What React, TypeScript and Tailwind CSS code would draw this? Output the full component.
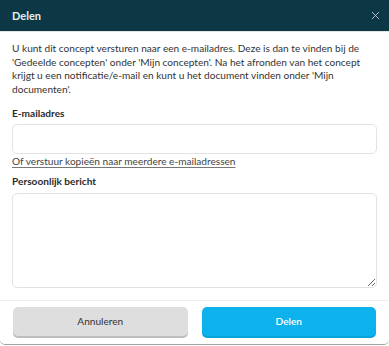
import React from 'react'
import { X } from 'lucide-react'

export default function App() {
  return (
    <div className="w-[389px] h-[346px] bg-white overflow-hidden" style={{ fontFamily: 'Lato, "Open Sans", sans-serif' }}>
      <div className="flex flex-col h-[345px] bg-white rounded-b-[5px] border-b-[1.5px] border-[#a3a3a3] overflow-hidden">
        {/* Header */}
        <div className="flex items-center justify-between h-[32px] shrink-0 pl-3 pr-[7px] bg-[#0b3844] border-b border-[#dfe5e7]">
          <span className="text-[11px] leading-[14px] font-bold text-[#e9eef0]">Delen</span>
          <X className="w-[13px] h-[13px] text-[#c8d2d5]" strokeWidth={1.6} />
        </div>

        {/* Body */}
        <div className="flex flex-col px-3 pt-[10px] text-[#333]">
          <p className="text-[10.1px] leading-[13.5px] pr-1">
            U kunt dit concept versturen naar een e-mailadres. Deze is dan te vinden bij de 'Gedeelde concepten' onder 'Mijn concepten'. Na het afronden van het concept krijgt u een notificatie/e-mail en kunt u het document vinden onder 'Mijn documenten'.
          </p>

          <label className="mt-[10px] text-[10.1px] leading-[14px] font-bold text-[#2b2b2b]">E-mailadres</label>
          <input className="mt-[4px] h-[30px] w-full rounded-[5px] border border-[#e3e3e3] outline-none" />
          <a className="text-[10.1px] leading-[14px] text-[#444] underline underline-offset-2 decoration-[#777] w-fit">
            Of verstuur kopieën naar meerdere e-mailadressen
          </a>

          <label className="mt-[6px] text-[10.1px] leading-[14px] font-bold text-[#2b2b2b]">Persoonlijk bericht</label>
          <textarea className="mt-[5px] h-[95px] w-full rounded-[5px] border border-[#e3e3e3] outline-none resize-y block" />
        </div>

        {/* Footer */}
        <div className="flex gap-[14px] px-[13px] pt-[6px] mt-[12px] border-t border-[#eeeeee]">
          <button className="flex-1 h-[29px] rounded-[5px] bg-[#dedede] shadow-[0_2px_0_#bdbdbd] text-[10.1px] text-[#333]">
            Annuleren
          </button>
          <button className="flex-1 h-[29px] rounded-[5px] bg-[#0db2ec] shadow-[0_2px_0_#0ba2d8] text-[10.1px] font-semibold text-white">
            Delen
          </button>
        </div>
      </div>
    </div>
  )
}
